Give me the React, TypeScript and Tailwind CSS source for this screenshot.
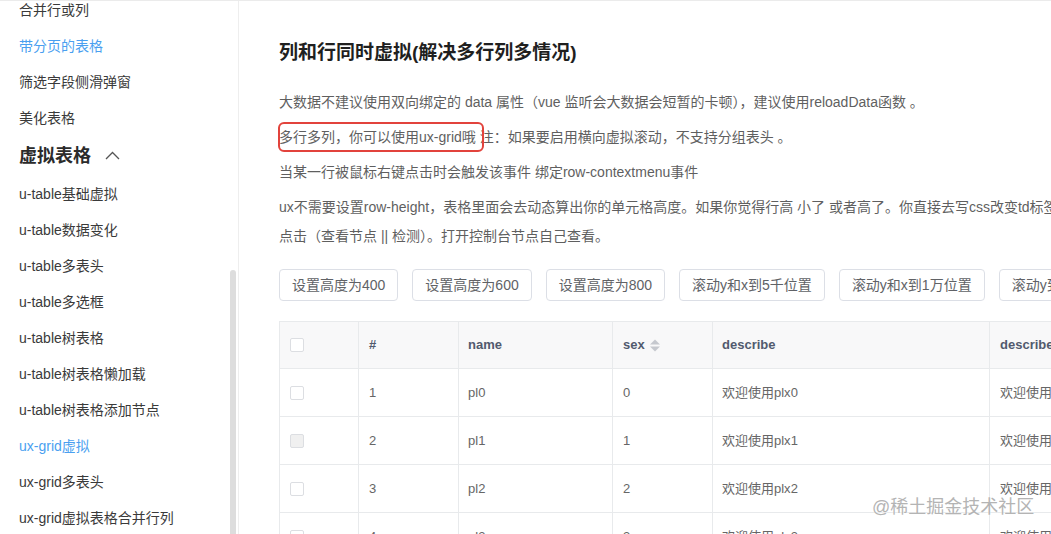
import React from "react";

const font = { fontFamily: '"Liberation Sans", "Noto Sans CJK SC", sans-serif' };

const topItems = [
  { t: "合并行或列" },
  { t: "带分页的表格", active: true },
  { t: "筛选字段侧滑弹窗" },
  { t: "美化表格" },
];
const subItems = [
  { t: "u-table基础虚拟" },
  { t: "u-table数据变化" },
  { t: "u-table多表头" },
  { t: "u-table多选框" },
  { t: "u-table树表格" },
  { t: "u-table树表格懒加载" },
  { t: "u-table树表格添加节点" },
  { t: "ux-grid虚拟", active: true },
  { t: "ux-grid多表头" },
  { t: "ux-grid虚拟表格合并行列" },
];

const buttons = [
  "设置高度为400",
  "设置高度为600",
  "设置高度为800",
  "滚动y和x到5千位置",
  "滚动y和x到1万位置",
  "滚动y到1万位置",
];

const rows = [0, 1, 2, 3];

function Checkbox({ gray }: { gray?: boolean }) {
  return (
    <span
      className={
        "block w-[14px] h-[14px] rounded-[2px] border border-[#dcdee2] " +
        (gray ? "bg-[#f0f0f0]" : "bg-white")
      }
    />
  );
}

function SortIcon() {
  return (
    <svg width="10" height="13" viewBox="0 0 10 13" className="ml-[5px]">
      <polygon points="0,5.5 5,0.5 10,5.5" fill="#c5c8ce" />
      <polygon points="0,7.5 5,12.5 10,7.5" fill="#c5c8ce" />
    </svg>
  );
}

export default function App() {
  return (
    <div
      className="w-[1051px] h-[534px] overflow-hidden flex border-t border-[#ebebeb] bg-white"
      style={font}
    >
      {/* Sidebar */}
      <div className="w-[239px] shrink-0 border-r border-[#eeeeee] relative overflow-hidden">
        <div className="mt-[-9px] pl-[19px]">
          {topItems.map((it) => (
            <div
              key={it.t}
              className={
                "h-[36px] flex items-center text-[14px] " +
                (it.active ? "text-[#4a9ff0]" : "text-[#3a3a3a]")
              }
            >
              {it.t}
            </div>
          ))}
          <div className="h-[40px] flex items-center text-[18px] font-bold text-[#2b2b2b]">
            <span>虚拟表格</span>
            <svg width="15" height="9" viewBox="0 0 15 9" className="ml-[14px] mt-[-1px]">
              <polyline points="1,8 7.5,1.5 14,8" fill="none" stroke="#555" strokeWidth="1.3" />
            </svg>
          </div>
          {subItems.map((it) => (
            <div
              key={it.t}
              className={
                "h-[36px] flex items-center text-[14px] " +
                (it.active ? "text-[#4a9ff0]" : "text-[#3a3a3a]")
              }
            >
              {it.t}
            </div>
          ))}
        </div>
        <div className="absolute left-[230px] top-[269px] w-[6px] h-[300px] rounded-t-[3px] bg-[#dddddd]" />
      </div>

      {/* Main */}
      <div className="flex-1 min-w-0 overflow-hidden pl-[40px] relative">
        <h1 className="mt-[38px] text-[19px] leading-[28px] font-bold text-[#1f1f1f] whitespace-nowrap">
          列和行同时虚拟(解决多行列多情况)
        </h1>
        <div className="mt-[21px] text-[14px] leading-[29px] text-[#5f5f5f] whitespace-nowrap">
          <p className="mb-[6px]">
            大数据不建议使用双向绑定的 data 属性（vue 监听会大数据会短暂的卡顿），建议使用reloadData函数 。
          </p>
          <p className="mb-[6px]">
            <span className="relative inline-block">
              多行多列，你可以使用ux-grid哦
              <span className="absolute left-[-1px] right-[-8px] top-[-1px] bottom-[0px] border-[2.5px] border-[#e2433c] rounded-[6px]" />
            </span>{" "}
            注：如果要启用横向虚拟滚动，不支持分组表头 。
          </p>
          <p className="mb-[6px]">当某一行被鼠标右键点击时会触发该事件 绑定row-contextmenu事件</p>
          <p className="mb-[6px]">
            ux不需要设置row-height，表格里面会去动态算出你的单元格高度。如果你觉得行高 小了 或者高了。你直接去写css改变td标签的高度即可。不知道怎么看元素？鼠标右键
            <br />
            点击（查看节点 || 检测）。打开控制台节点自己查看。
          </p>
        </div>

        <div className="mt-[18px] flex gap-[14px]">
          {buttons.map((b) => (
            <button
              key={b}
              className="h-[32px] px-[12px] shrink-0 border border-[#dcdfe6] rounded-[4px] bg-white text-[14px] text-[#606266] whitespace-nowrap"
            >
              {b}
            </button>
          ))}
        </div>

        {/* Table */}
        <div className="mt-[20px] w-[900px] border-l border-t border-[#e8eaec] text-[13px]">
          <div className="flex h-[47px] bg-[#f8f8f9] border-b border-[#e8eaec] font-bold text-[#515a6e]">
            <div className="w-[79px] shrink-0 border-r border-[#e8eaec] flex items-center pl-[10px]">
              <Checkbox />
            </div>
            <div className="w-[100px] shrink-0 border-r border-[#e8eaec] flex items-center pl-[10px]">#</div>
            <div className="w-[154px] shrink-0 border-r border-[#e8eaec] flex items-center pl-[9px]">name</div>
            <div className="w-[100px] shrink-0 border-r border-[#e8eaec] flex items-center pl-[10px]">
              sex
              <SortIcon />
            </div>
            <div className="w-[277px] shrink-0 border-r border-[#e8eaec] flex items-center pl-[9px]">describe</div>
            <div className="w-[190px] shrink-0 border-r border-[#e8eaec] flex items-center pl-[10px]">describe</div>
          </div>
          {rows.map((i) => (
            <div key={i} className="flex h-[48px] border-b border-[#e8eaec] text-[#666666]">
              <div className="w-[79px] shrink-0 border-r border-[#e8eaec] flex items-center pl-[10px]">
                <Checkbox gray={i === 1} />
              </div>
              <div className="w-[100px] shrink-0 border-r border-[#e8eaec] flex items-center pl-[10px]">{i + 1}</div>
              <div className="w-[154px] shrink-0 border-r border-[#e8eaec] flex items-center pl-[9px]">pl{i}</div>
              <div className="w-[100px] shrink-0 border-r border-[#e8eaec] flex items-center pl-[10px]">{i}</div>
              <div className="w-[277px] shrink-0 border-r border-[#e8eaec] flex items-center pl-[9px]">欢迎使用plx{i}</div>
              <div className="w-[190px] shrink-0 border-r border-[#e8eaec] flex items-center pl-[10px]">欢迎使用plx{i}</div>
            </div>
          ))}
        </div>

        <div className="absolute left-[633px] top-[494px] text-[18px] leading-[24px] text-[#b4b4b4] whitespace-nowrap [text-shadow:0_0_2px_#ffffff]">
          @稀土掘金技术社区
        </div>
      </div>
    </div>
  );
}
